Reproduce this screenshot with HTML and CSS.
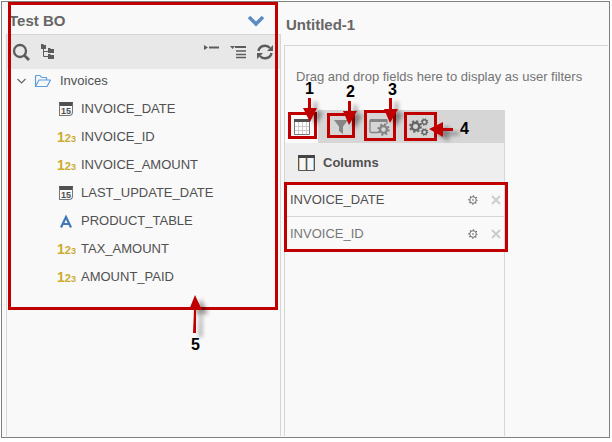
FILE: index.html
```html
<!DOCTYPE html>
<html lang="en">
<head>
<meta charset="utf-8">
<title>Untitled-1</title>
<link rel="stylesheet" href="styles.css">
</head>
<body>
<svg class="defs" aria-hidden="true">
  <symbol id="cog" viewBox="-6 -6 12 12">
    <circle r="3.300" fill="none" stroke="#666" stroke-width="1"/>
    <circle r="4.200" fill="none" stroke="#666" stroke-width="1.100" stroke-dasharray="1.200 2.099" stroke-dashoffset=".6"/>
    <circle r=".8" fill="#555"/>
  </symbol>
  <symbol id="close" viewBox="0 0 10 10">
    <path d="M1 1L9 9M9 1L1 9" stroke="#ccc" stroke-width="2"/>
  </symbol>
</svg>
<div class="frame">
  <aside class="sidebar">
    <header class="side-head">
      <h1>Test BO</h1>
      <button aria-label="Switch business object"><svg width="18" height="12" viewBox="0 0 18 12"><path d="M2 2L9 9L16 2" fill="none" stroke="#5a8cc4" stroke-width="3.500"/></svg></button>
    </header>
    <div class="side-body">
      <div class="toolbar">
        <button aria-label="Search"><svg width="18" height="18" viewBox="0 0 18 18"><circle cx="8" cy="8" r="6" fill="none" stroke="#5c5c5c" stroke-width="2.300"/><path d="M12 12L17 17" stroke="#5c5c5c" stroke-width="2.800"/></svg></button>
        <button aria-label="Tree"><svg width="14" height="16" viewBox="0 0 14 16"><path d="M1 0h2l1 1h2v4H1zM8 4h2l1 1h3v4H8zM8 10h2l1 1h3v4H8z" fill="#5c5c5c"/><path d="M3.500 4V12.500H8M3.500 7.500H8" fill="none" stroke="#5c5c5c"/></svg></button>
        <span class="grow"></span>
        <button aria-label="Collapse all"><svg width="16" height="14" viewBox="0 0 16 14"><path d="M0 0L4 2.500L0 5Z" fill="#5c5c5c"/><path d="M5 2.500H15" stroke="#5c5c5c" stroke-width="2"/></svg></button>
        <button aria-label="Expand all"><svg width="17" height="14" viewBox="0 0 17 14"><path d="M0 1H5L2.500 4Z" fill="#5c5c5c"/><path d="M5 2H16" stroke="#5c5c5c" stroke-width="2"/><path d="M6 6H16M6 9.500H16M6 12.500H16" stroke="#5c5c5c" stroke-width="1.500"/></svg></button>
        <button aria-label="Refresh"><svg width="16" height="16" viewBox="0 0 16 16"><path d="M1.500 7A6.500 6 0 0 1 13 4M14.500 9A6.500 6 0 0 1 3 12" fill="none" stroke="#5c5c5c" stroke-width="2.400"/><path d="M16 1V7H10ZM0 15V9H6Z" fill="#5c5c5c"/></svg></button>
      </div>
      <div class="tree">
        <div class="node">
          <svg width="9" height="7" viewBox="0 0 9 7"><path d="M.5 1L4.500 5L8.500 1" fill="none" stroke="#666" stroke-width="1.200"/></svg>
          <svg width="18" height="14" viewBox="0 0 18 14"><path d="M1.500 12.500V2.500Q1.500 1.500 2.500 1.500H6L7.500 3.500H12.500V6M1.500 12.500L5 6H16.500L13 12.500Z" fill="none" stroke="#5d9fdc" stroke-width="1.200" stroke-linejoin="round"/></svg>
          <span>Invoices</span>
        </div>
        <ul class="fields">
          <li><span class="icon date">15</span>INVOICE_DATE</li>
          <li><span class="icon num">1<b>2</b><i>3</i></span>INVOICE_ID</li>
          <li><span class="icon num">1<b>2</b><i>3</i></span>INVOICE_AMOUNT</li>
          <li><span class="icon date">15</span>LAST_UPDATE_DATE</li>
          <li><span class="icon"><svg width="18" height="16" viewBox="0 0 18 16"><path d="M4 14.500L9 4L14 14.500M6 11H12" fill="none" stroke="#3f78b8" stroke-width="2.200"/></svg></span>PRODUCT_TABLE</li>
          <li><span class="icon num">1<b>2</b><i>3</i></span>TAX_AMOUNT</li>
          <li><span class="icon num">1<b>2</b><i>3</i></span>AMOUNT_PAID</li>
        </ul>
      </div>
    </div>
  </aside>
  <main class="main">
    <h2>Untitled-1</h2>
    <div class="work">
      <p class="drop">Drag and drop fields here to display as user filters</p>
      <section class="panel">
        <nav class="tabs">
          <button class="tab active" aria-label="Columns"><svg width="16" height="16" viewBox="0 0 16 16"><path d="M.5.5H15.500V15.500H.5Z" fill="#fff" stroke="#777"/><path d="M0 0H16V3H0Z" fill="#505050"/><path d="M4.500 3V15M8.500 3V15M12.500 3V15M1 7.500H15M1 11.500H15" stroke="#ccc"/></svg></button>
          <button class="tab" aria-label="Filters"><svg width="16" height="16" viewBox="0 0 16 16"><path d="M1 1H15L10 7.500V15L6 12V7.500Z" fill="#858585"/></svg></button>
          <button class="tab" aria-label="Display settings"><svg width="22" height="18" viewBox="0 0 22 18"><path d="M9 14.500H2.500Q1 14.500 1 13V2.500H18V6" fill="none" stroke="#858585" stroke-width="1.300"/><path d="M1 1H18V4H1Z" fill="#858585"/><circle cx="14.500" cy="11.500" r="3.500" fill="none" stroke="#858585" stroke-width="2.400"/><circle cx="14.500" cy="11.500" r="5.200" fill="none" stroke="#858585" stroke-width="2" stroke-dasharray="2 2.084"/></svg></button>
          <button class="tab" aria-label="Options"><svg width="20" height="18" viewBox="0 0 20 18"><g fill="none" stroke="#666"><circle cx="6.500" cy="8.500" r="3.700" stroke-width="2.400"/><circle cx="6.500" cy="8.500" r="5.500" stroke-width="1.700" stroke-dasharray="2.200 2.120"/><circle cx="15.500" cy="4" r="2.200" stroke-width="1.400"/><circle cx="15.500" cy="4" r="3.200" stroke-width="1.200" stroke-dasharray="1.200 1.313"/><circle cx="15.500" cy="14" r="2.200" stroke-width="1.400"/><circle cx="15.500" cy="14" r="3.200" stroke-width="1.200" stroke-dasharray="1.200 1.313"/></g></svg></button>
        </nav>
        <h3><svg width="17" height="16" viewBox="0 0 17 16"><path d="M.5 1V15.500H16.500V1" fill="#f6f6f6" stroke="#555"/><path d="M0 0H17V3H0Z" fill="#444"/><path d="M1.500 3V15M7.500 3V15" stroke="#e0c08c"/><path d="M9.500 3V15M15.500 3V15" stroke="#9cc4e0"/><path d="M8.500 2V16" stroke="#555"/></svg>Columns</h3>
        <ul class="cols">
          <li><span>INVOICE_DATE</span><button aria-label="Configure INVOICE_DATE"><svg width="12" height="12"><use href="#cog"/></svg></button><button aria-label="Remove INVOICE_DATE"><svg width="10" height="10"><use href="#close"/></svg></button></li>
          <li class="muted"><span>INVOICE_ID</span><button aria-label="Configure INVOICE_ID"><svg width="12" height="12"><use href="#cog"/></svg></button><button aria-label="Remove INVOICE_ID"><svg width="10" height="10"><use href="#close"/></svg></button></li>
        </ul>
      </section>
    </div>
  </main>
</div>
<svg class="callouts" width="612" height="442" viewBox="0 0 612 442">
  <defs><filter id="shade" x="-100%" y="-100%" width="400%" height="400%"><feDropShadow dx="6" dy="4" stdDeviation="2" flood-color="#000" flood-opacity=".4"/></filter></defs>
  <g fill="none" stroke="#c00000" stroke-width="3">
    <rect x="9.500" y="3.500" width="267" height="305"/>
    <rect x="289.500" y="113.500" width="26" height="24"/>
    <rect x="328.500" y="114.500" width="25" height="22"/>
    <rect x="365.500" y="111.500" width="29" height="28"/>
    <rect x="405.500" y="113.500" width="30" height="26"/>
    <rect x="285.500" y="183.500" width="221" height="67"/>
  </g>
  <g fill="#c00000">
    <path filter="url(#shade)" d="M308 98h3v10h6l-7 14l-7-14h5z"/>
    <path filter="url(#shade)" d="M348 101h3v10h6l-8 14l-6-14h5z"/>
    <path filter="url(#shade)" d="M389 98h3v11h6l-8 14l-6-14h5z"/>
    <path filter="url(#shade)" d="M453 128v3h-10v6l-14-8l14-7v6z"/>
    <path filter="url(#shade)" d="M193 333h3v-23h6l-7-15l-6 15h5z"/>
  </g>
  <g class="numbers"><text x="305" y="94">1</text><text x="346" y="97">2</text><text x="388" y="95">3</text><text x="460" y="134">4</text><text x="191" y="350">5</text></g>
</svg>
</body>
</html>
```
FILE: styles.css
```css
* { box-sizing: border-box; }
body {
  margin: 0;
  padding: 1px 2px 4px 1px;
  min-height: 100vh;
  display: flex;
  position: relative;
  background: #fff;
  color: #505050;
  font: 13px/20px "Liberation Sans", Arial, sans-serif;
}
.defs { position: absolute; width: 0; height: 0; }
h1, h2, h3, p, ul { margin: 0; padding: 0; }
ul { list-style: none; }
svg { display: block; }
button { border: 0; padding: 0; background: none; display: grid; place-items: center; }
.frame {
  flex: 1;
  display: flex;
  gap: 3px;
  padding: 0 1px 1px 4px;
  border: 1px solid #808080;
  background: #f9f9f9;
}
.sidebar { flex: 0 0 275px; display: flex; flex-direction: column; }
.side-head { height: 32px; display: flex; align-items: center; justify-content: space-between; padding: 6px 16px 0 3px; }
h1, h2 { font-size: 15px; line-height: 20px; color: #666; }
.side-body { flex: 1; border: 1px solid #d6d6d6; border-bottom: 0; }
.toolbar { height: 34px; display: flex; align-items: center; gap: 10px; padding: 0 7px 0 5px; background: #e8e8e8; }
.grow { flex: 1; }
.node { height: 24px; display: flex; align-items: center; gap: 8px; padding-left: 10px; }
.fields { padding-top: 2px; }
.fields li { height: 28px; display: flex; align-items: center; gap: 6px; padding-left: 50px; }
.icon { width: 18px; height: 16px; display: flex; }
.date {
  width: 14px;
  height: 14px;
  margin: 0 2px;
  justify-content: center;
  border: 1px solid #777;
  border-top: 4px solid #505050;
  border-bottom-right-radius: 4px;
  font-size: 9px;
  font-weight: 700;
  line-height: 10px;
}
.num { align-items: baseline; color: #cdab2b; font-size: 14px; font-weight: 700; line-height: 16px; }
.num b { font-size: 11px; }
.num i { font-size: 9px; font-style: normal; }
.main { flex: 1; min-width: 0; display: flex; flex-direction: column; }
h2 { height: 43px; padding: 13px 0 0 2px; }
.work { flex: 1; display: flex; flex-direction: column; border: 1px solid #d6d6d6; border-width: 1px 0 0 1px; }
.drop { height: 64px; padding: 21px 11px; color: #747474; }
.panel { flex: 1; width: 220px; border-right: 1px solid #d6d6d6; }
.tabs { height: 33px; display: flex; gap: 6px; background: #d6d6d6; }
.tab { width: 33px; }
.tab.active { background: #f9f9f9; }
h3 { height: 40px; display: flex; align-items: center; gap: 8px; padding-left: 13px; background: #eee; font-size: 13px; }
.cols li { height: 34px; display: flex; align-items: center; gap: 12px; padding: 0 3px 0 5px; border-bottom: 1px solid #d6d6d6; }
.cols li:last-child { border: 0; }
.cols span { flex: 1; }
.cols .muted { color: #777; }
.callouts { position: absolute; left: 0; top: 0; pointer-events: none; }
.numbers { font-size: 16px; font-weight: 700; fill: #000; }
```
